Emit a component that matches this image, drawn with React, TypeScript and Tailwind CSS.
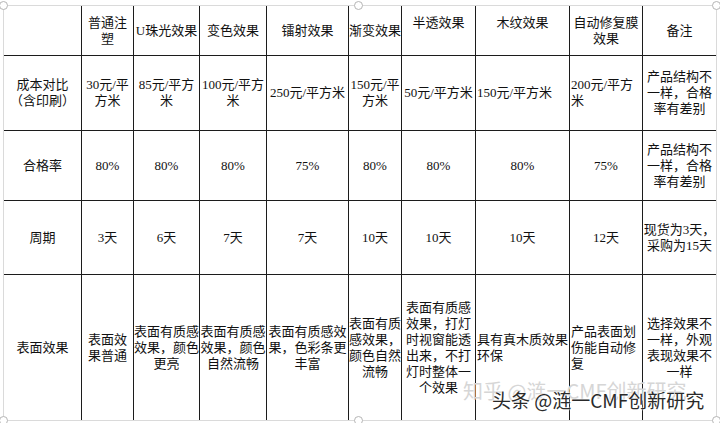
import React from "react";

type Cell = { lines: string[]; left?: boolean; top?: boolean };

const c = (s: string, opts: { left?: boolean; top?: boolean } = {}): Cell => ({
  lines: s.split("|"),
  ...opts,
});

const rows: Cell[][] = [
  [
    c(""),
    c("普通注|塑"),
    c("U珠光效果"),
    c("变色效果"),
    c("镭射效果"),
    c("渐变效果"),
    c("半透效果", { top: true }),
    c("木纹效果", { top: true }),
    c("自动修复膜|效果"),
    c("备注"),
  ],
  [
    c("成本对比|（含印刷）"),
    c("30元/平|方米"),
    c("85元/平方|米"),
    c("100元/平方|米"),
    c("250元/平方米"),
    c("150元/平|方米"),
    c("50元/平方米"),
    c("150元/平方米", { left: true }),
    c("200元/平方|米", { left: true }),
    c("产品结构不|一样，合格|率有差别"),
  ],
  [
    c("合格率"),
    c("80%"),
    c("80%"),
    c("80%"),
    c("75%"),
    c("80%"),
    c("80%"),
    c("80%"),
    c("75%"),
    c("产品结构不|一样，合格|率有差别"),
  ],
  [
    c("周期"),
    c("3天"),
    c("6天"),
    c("7天"),
    c("7天"),
    c("10天"),
    c("10天"),
    c("10天"),
    c("12天"),
    c("现货为3天，|采购为15天"),
  ],
  [
    c("表面效果"),
    c("表面效|果普通"),
    c("表面有质感|效果，颜色|更亮"),
    c("表面有质感|效果，颜色|自然流畅"),
    c("表面有质感效|果，色彩条更|丰富"),
    c("表面有质|感效果，|颜色自然|流畅"),
    c("表面有质感|效果，打灯|时视窗能透|出来，不打|灯时整体一|个效果"),
    c("具有真木质效果|环保", { left: true }),
    c("产品表面划|伤能自动修|复", { left: true }),
    c("选择效果不|一样，外观|表现效果不|一样"),
  ],
];

function Handle({ className }: { className: string }) {
  return (
    <span
      className={`absolute h-[9px] w-[9px] rounded-full border border-[#b5b5b5] bg-white ${className}`}
    />
  );
}

export default function App() {
  return (
    <div className="h-[423px] w-[720px] overflow-hidden bg-white pl-[3px] pt-[5px] font-['Liberation_Serif','Noto_Sans_CJK_SC',serif] text-[13px] leading-[16px] text-[#111]">
      <div className="relative h-[416px] w-[714px] border border-[#dadada]">
        <div className="grid grid-cols-[78px_52px_66px_67px_82px_53px_74px_94px_73px_73px] grid-rows-[50px_75px_70px_74px_145px]">
          {rows.map((row, ri) =>
            row.map((cell, ci) => (
              <div
                key={`${ri}-${ci}`}
                className={`flex flex-col whitespace-nowrap ${
                  ci < 9 ? "border-r border-[#1c1c1c]" : ""
                } ${ri < 4 ? "border-b border-[#1c1c1c]" : ""} ${
                  cell.top ? "justify-start pt-[9px]" : "justify-center"
                } ${cell.left ? "items-start pl-px" : "items-center"}`}
              >
                {cell.lines.map((line, li) => (
                  <span key={li} className={cell.left ? "text-left" : "text-center"}>
                    {line}
                  </span>
                ))}
              </div>
            ))
          )}
        </div>

        <span className="pointer-events-none absolute left-[459px] top-[373px] whitespace-nowrap font-['Noto_Sans_CJK_SC',sans-serif] text-[20px] leading-[24px] text-[#d6d6d6]">
          知乎 @涟一CMF创新研究
        </span>
        <span className="pointer-events-none absolute left-[488px] top-[382px] whitespace-nowrap font-['Noto_Sans_CJK_SC',sans-serif] text-[19px] leading-[24px] text-[#2a2a2a] [text-shadow:0_0_2px_#fff,0_0_2px_#fff]">
          头条 @涟一CMF创新研究
        </span>

        <Handle className="-left-[5px] -top-[5px]" />
        <Handle className="left-[350px] -top-[5px]" />
        <Handle className="-right-[5px] -top-[5px]" />
        <Handle className="-bottom-[5px] -left-[5px]" />
        <Handle className="-bottom-[5px] left-[350px]" />
        <Handle className="-bottom-[5px] -right-[5px]" />
      </div>
    </div>
  );
}
